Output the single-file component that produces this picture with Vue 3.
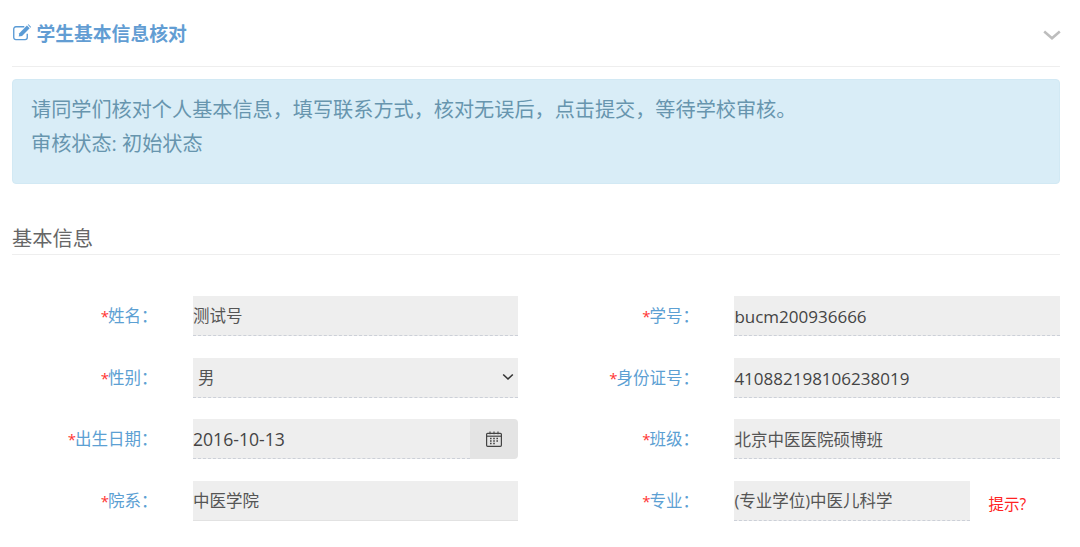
<script setup>
const left = [
  { label: '姓名', value: '测试号', type: 'text' },
  { label: '性别', value: '男', type: 'select' },
  { label: '出生日期', value: '2016-10-13', type: 'date', latin: 'wide' },
  { label: '院系', value: '中医学院', type: 'text', solid: true }
]
const right = [
  { label: '学号', value: 'bucm200936666', type: 'text', latin: 'narrow' },
  { label: '身份证号', value: '410882198106238019', type: 'text', latin: 'narrow' },
  { label: '班级', value: '北京中医医院硕博班', type: 'text' },
  { label: '专业', value: '(专业学位)中医儿科学', type: 'hint' }
]
const rows = left.flatMap((item, i) => [item, right[i]])
</script>

<template>
  <div class="page">
    <header class="head">
      <div class="title">
        <svg class="edit" viewBox="0 0 18 16" width="19" height="17" fill="none">
          <path d="M13.5 9.2v3.6a2 2 0 0 1-2 2H2.7a2 2 0 0 1-2-2V4.6a2 2 0 0 1 2-2h8" stroke="#5b9bd5" stroke-width="1.3"/>
          <path d="M6 8.6 13.2 1.4l2.6 2.6-7.2 7.2-3.2.6z" fill="#5b9bd5"/>
          <path d="M14 .7l.7-.4 2.5 2.5-.6.7z" fill="#5b9bd5"/>
        </svg>
        <span>学生基本信息核对</span>
      </div>
      <svg class="chev" viewBox="0 0 18 10" width="18" height="10" fill="none">
        <path d="M1.2 1.5 9 8.3l7.8-6.8" stroke="#bdbdbd" stroke-width="2.5"/>
      </svg>
    </header>

    <div class="alert">
      <p>请同学们核对个人基本信息，填写联系方式，核对无误后，点击提交，等待学校审核。</p>
      <p>审核状态: 初始状态</p>
    </div>

    <h3 class="section">基本信息</h3>

    <div class="form">
      <div v-for="item in rows" :key="item.label" class="row">
        <label class="label"><i>*</i>{{ item.label }}：</label>
        <div class="control" :class="'is-' + item.type">
          <div class="field" :class="{ solid: item.solid }">
            <span class="value" :class="item.latin">{{ item.value }}</span>
            <svg v-if="item.type === 'select'" class="caret" viewBox="0 0 12 8" width="12" height="8" fill="none">
              <path d="M1.2 1.5 6 6l4.8-4.5" stroke="#333" stroke-width="1.6"/>
            </svg>
          </div>
          <div v-if="item.type === 'date'" class="addon">
            <svg viewBox="0 0 16 16" width="16" height="16" fill="none">
              <rect x=".6" y="2.3" width="14.8" height="13" rx="1" stroke="#444" stroke-width="1.2"/>
              <path d="M.6 5.2h14.8" stroke="#444" stroke-width="1.2"/>
              <path d="M4 .6v2.6M8 .6v2.6M12 .6v2.6" stroke="#444" stroke-width="1.1"/>
              <path d="M4 7.5h1.6M7.2 7.5h1.6M10.4 7.5H12M4 10h1.6M7.2 10h1.6M10.4 10H12M4 12.5h1.6M7.2 12.5h1.6" stroke="#444" stroke-width="1.3"/>
            </svg>
          </div>
          <span v-if="item.type === 'hint'" class="hint">提示?</span>
        </div>
      </div>
    </div>
  </div>
</template>

<style scoped>
.page {
  box-sizing: border-box;
  width: 1080px;
  height: 547px;
  overflow: hidden;
  padding: 0 20px 0 12px;
  background: #fff;
  font-family: "Open Sans", "Noto Sans CJK SC", sans-serif;
  color: #555;
}
.head {
  height: 66px;
  border-bottom: 1px solid #eee;
  display: flex;
  align-items: center;
  justify-content: space-between;
  box-sizing: content-box;
}
.title {
  display: flex;
  align-items: center;
  gap: 4.5px;
  padding-left: 1px;
  padding-top: 2px;
  font-size: 18.8px;
  font-weight: 700;
  color: #629dd3;
  line-height: 1;
}
.edit { flex: none; margin-top: -3px; }
.chev { margin-right: -1px; margin-top: 3px; }
.alert {
  box-sizing: border-box;
  height: 105px;
  margin-top: 12px;
  padding: 12px 18px;
  background: #d9edf7;
  border: 1px solid #d2e9f4;
  border-radius: 4px;
  color: #6795ae;
  font-size: 20.15px;
  line-height: 34px;
}
.alert p { margin: 0; }
.section {
  margin: 39px 0 0;
  height: 31px;
  border-bottom: 1px solid #eee;
  font-size: 20.25px;
  font-weight: 400;
  line-height: 31px;
  color: #666;
}
.form {
  margin-top: 41px;
  display: grid;
  grid-template-columns: 506px 1fr;
  column-gap: 35.4px;
  row-gap: 21.67px;
}
.row {
  display: flex;
  height: 40px;
}
.label {
  box-sizing: border-box;
  width: 181px;
  flex: none;
  padding-right: 35.5px;
  text-align: right;
  font-size: 16.5px;
  line-height: 39px;
  color: #5ca0d3;
  white-space: nowrap;
}
.label i {
  font-style: normal;
  font-size: 15px;
  margin-right: -1px;
  color: #f33;
}
.control {
  flex: 1;
  display: flex;
  min-width: 0;
}
.field {
  box-sizing: border-box;
  flex: 1;
  height: 40px;
  display: flex;
  align-items: center;
  justify-content: space-between;
  background: #eee;
  border-bottom: 1px dashed #ccd0d8;
  font-size: 16.5px;
  color: #555;
  white-space: nowrap;
}
.field.solid { border-bottom: 1px solid #e2e2e2; }
.value { line-height: 1; padding-top: 2px; }
.value.wide { font-size: 17.6px; color: #444; }
.value.narrow { font-size: 17px; color: #444; }
.is-select .value { padding-left: 5px; }
.caret { margin-right: 4px; }
.is-date .field { flex: none; width: 277px; }
.addon {
  flex: 1;
  height: 40px;
  background: #e4e4e4;
  border-radius: 0 4px 4px 0;
  display: flex;
  align-items: center;
  justify-content: center;
}
.is-hint .field { flex: none; width: 236px; }
.hint {
  margin: 13px 0 0 18px;
  font-size: 15.5px;
  line-height: 20px;
  color: #f22;
}
</style>
